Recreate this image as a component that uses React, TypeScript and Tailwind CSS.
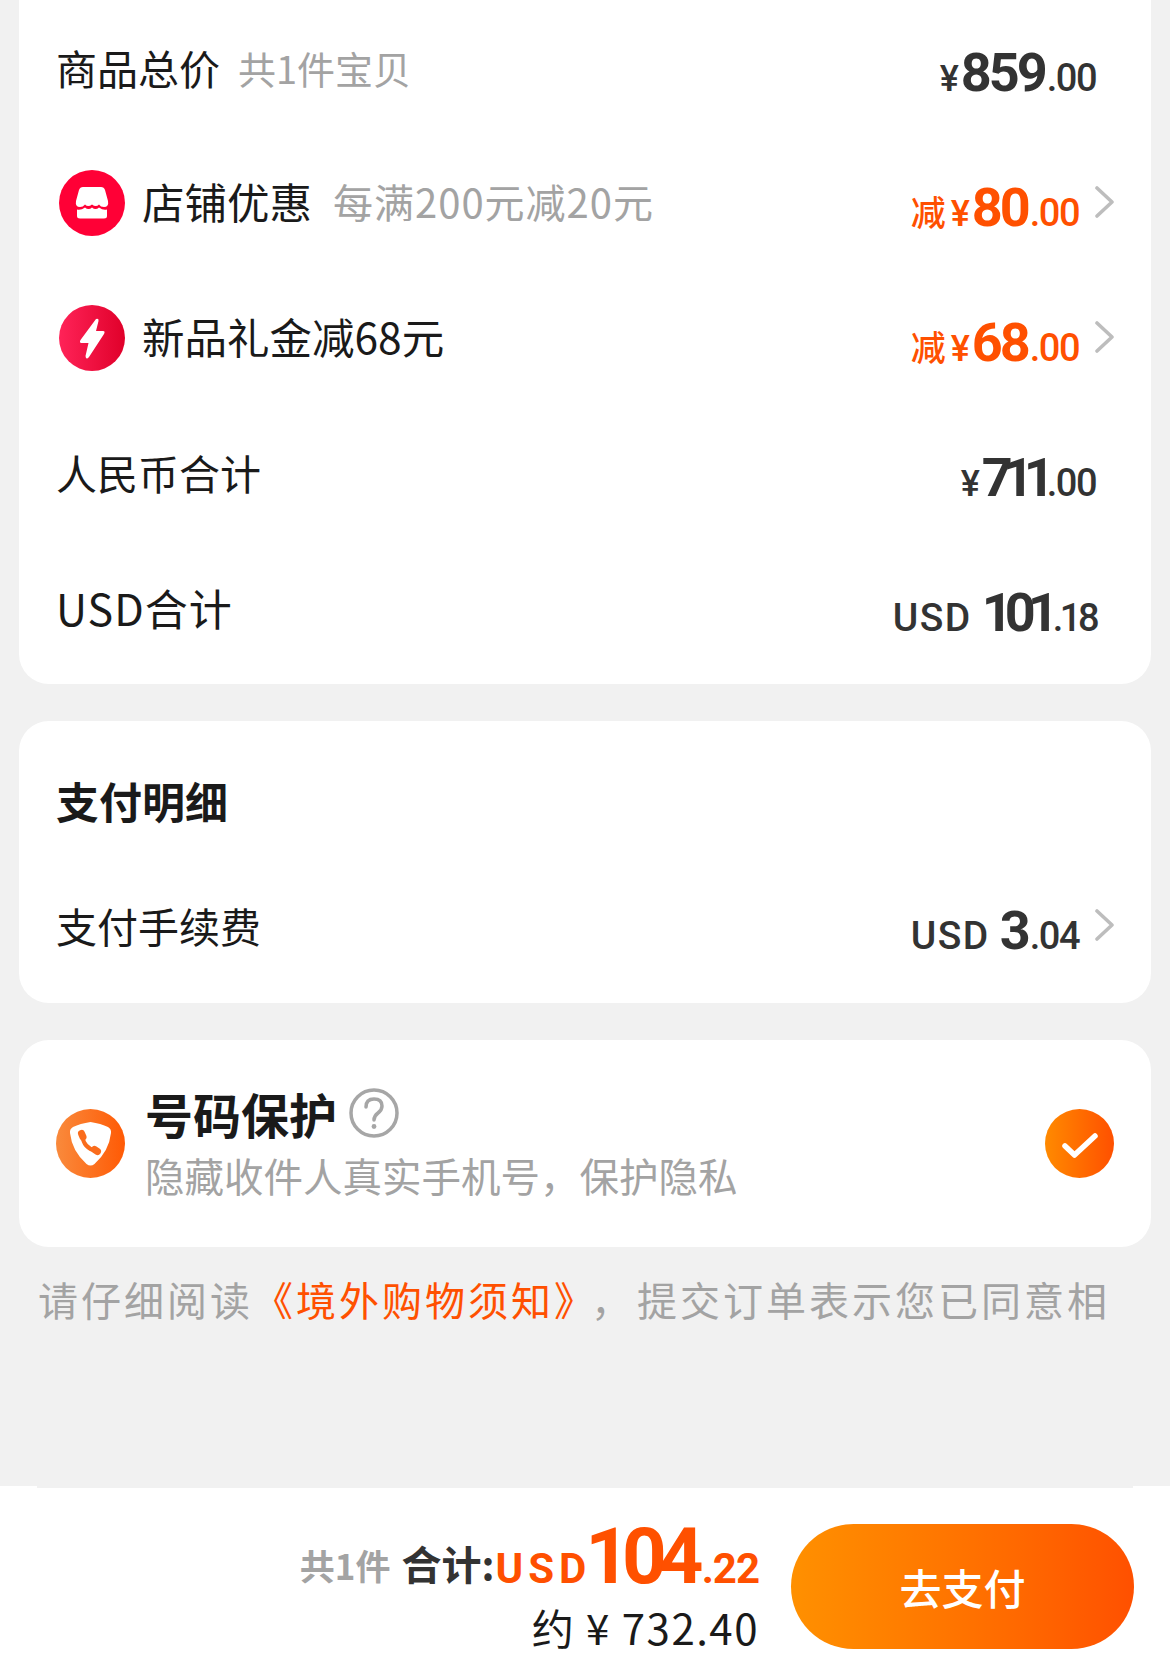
import React from 'react';

const CJK = '"Noto Sans CJK SC", "Noto Sans", sans-serif';
const NUM = { fontFamily: 'Roboto, "Noto Sans CJK SC", sans-serif' };

type PriceProps = {
  minus?: boolean;
  yen?: boolean;
  usd?: boolean;
  whole: string;
  cents: string;
  orange?: boolean;
  wholeClass?: string;
  centsClass?: string;
};

// 价格：前缀小、整数大、小数小
const Price: React.FC<PriceProps> = ({
  minus,
  yen,
  usd,
  whole,
  cents,
  orange,
  wholeClass = 'tracking-[-3px] mr-[2px]',
  centsClass = 'tracking-[-1.5px]',
}) => (
  <span
    className={`flex items-baseline font-medium pt-[10px] ${orange ? 'text-[#ff5000]' : 'text-[#333333]'}`}
    style={NUM}
  >
    {usd && <span className="text-[39px] leading-none tracking-[1.5px] mr-[10px]">USD</span>}
    {minus && <span className="text-[35px] leading-none mr-[5px]">减</span>}
    {yen && <span className="text-[36px] leading-none mr-[2px]">¥</span>}
    <span className={`text-[54px] leading-none font-bold ${wholeClass}`}>{whole}</span>
    <span className={`text-[38px] leading-none ${centsClass}`}>{cents}</span>
  </span>
);

const Chevron = () => (
  <svg width="20" height="34" viewBox="0 0 20 34" className="ml-[16px] -mr-[1px] mb-[2px] shrink-0">
    <path d="M2 3 L17 17 L2 31" fill="none" stroke="#bdbdbd" strokeWidth="3.6" strokeLinecap="round" strokeLinejoin="round" />
  </svg>
);

const ShopIcon = () => (
  <svg width="66" height="66" viewBox="0 0 66 66" className="shrink-0 ml-[3px]">
    <circle cx="33" cy="33" r="33" fill="#ff0036" />
    <path
      d="M24 17 H42 Q45 17 46 20 L49 31 Q50 37 45 37 Q41.500 37 40 34.500 Q37 37.500 33 34.500 Q29 37.500 26 34.500 Q24 37 21 37 Q16 37 17 31 L20 20 Q21 17 24 17 Z"
      fill="#fff"
    />
    <path
      d="M18 39.500 Q22 40.500 26 37.500 Q29.500 40.500 33 37.500 Q36.500 40.500 40 37.500 Q44 40.500 48 39.500 V46 Q48 48.500 45 48.500 H21 Q18 48.500 18 46 Z"
      fill="#fff"
    />
  </svg>
);

const BoltIcon = () => (
  <svg width="66" height="66" viewBox="0 0 66 66" className="shrink-0 ml-[3px]">
    <defs>
      <linearGradient id="bolt" x1="0" y1="0" x2="1" y2="0">
        <stop offset="0" stopColor="#ff2358" />
        <stop offset="1" stopColor="#e0002a" />
      </linearGradient>
    </defs>
    <circle cx="33" cy="33" r="33" fill="url(#bolt)" />
    <path
      d="M37 14 Q40 13 39.500 16 L37 26 H44 Q46.500 26 45 29 L30 52 Q27 55.500 26.500 51 L29.500 38 H22.500 Q20 38 21.500 35 Z"
      fill="#fff"
    />
  </svg>
);

const ShieldIcon = () => (
  <svg width="69" height="69" viewBox="0 0 69 69" className="shrink-0">
    <defs>
      <linearGradient id="shield" x1="0" y1="0" x2="1" y2="0">
        <stop offset="0" stopColor="#f98a3c" />
        <stop offset="1" stopColor="#ff5a05" />
      </linearGradient>
    </defs>
    <circle cx="34.500" cy="34.500" r="34.500" fill="url(#shield)" />
    <path
      d="M34.500 13 Q45 14.500 52 18 Q55.500 20 55 24 Q53 42 38.500 55 Q34.500 58 30.500 55 Q16 42 14 24 Q13.500 20 17 18 Q24 14.500 34.500 13 Z"
      fill="#fff"
    />
    <path d="M26.500 27 Q27.500 39 40 42" fill="none" stroke="#fa6c1c" strokeWidth="4" strokeLinecap="round" />
    <path d="M25.500 24.500 L27 28" fill="none" stroke="#fa6c1c" strokeWidth="7" strokeLinecap="round" />
    <path d="M38.500 40.500 L41.500 42.500" fill="none" stroke="#fa6c1c" strokeWidth="7" strokeLinecap="round" />
  </svg>
);

const CheckIcon = () => (
  <svg width="69" height="69" viewBox="0 0 69 69" className="shrink-0">
    <defs>
      <linearGradient id="check" x1="0" y1="0" x2="1" y2="0">
        <stop offset="0" stopColor="#ff8a00" />
        <stop offset="1" stopColor="#ff5000" />
      </linearGradient>
    </defs>
    <circle cx="34.500" cy="34.500" r="34.500" fill="url(#check)" />
    <path d="M20 37 L29.500 46 L50 27" fill="none" stroke="#fff" strokeWidth="5.500" strokeLinecap="round" strokeLinejoin="round" />
  </svg>
);

const HelpIcon = () => (
  <svg width="50" height="50" viewBox="0 0 50 50" className="shrink-0">
    <circle cx="25" cy="25" r="23" fill="none" stroke="#a6a6a6" strokeWidth="3.500" />
    <path d="M17 19 Q17 11 25 11 Q33 11 33 18 Q33 22 29 25 Q25 28 25 32" fill="none" stroke="#a6a6a6" strokeWidth="3.500" strokeLinecap="round" />
    <circle cx="25" cy="38.500" r="2.400" fill="#a6a6a6" />
  </svg>
);

export default function App() {
  return (
    <div className="w-[1170px] h-[1659px] flex flex-col bg-[#f1f1f1] overflow-hidden" style={{ fontFamily: CJK }}>
      {/* 金额明细 */}
      <div className="mx-[19px] h-[684px] bg-white rounded-b-[30px] px-[37px] flex flex-col">
        <div className="h-[135px] flex items-center justify-between pr-[18px]">
          <div className="flex items-center text-[41px] text-[#1a1a1a]">
            商品总价
            <span className="ml-[18px] text-[#a3a3a3] text-[38px]">共1件宝贝</span>
          </div>
          <Price yen whole="859" cents=".00" />
        </div>
        <div className="h-[135px] flex items-center justify-between">
          <div className="flex items-center text-[42.5px] text-[#1a1a1a]">
            <ShopIcon />
            <span className="ml-[17px] pb-[3px]">店铺优惠</span>
            <span className="ml-[21px] pb-[3px] text-[#a3a3a3] text-[40px] tracking-[1px] whitespace-nowrap">每满200元减20元</span>
          </div>
          <div className="flex items-center">
            <Price minus yen whole="80" cents=".00" orange />
            <Chevron />
          </div>
        </div>
        <div className="h-[135px] flex items-center justify-between">
          <div className="flex items-center text-[42.5px] text-[#1a1a1a]">
            <BoltIcon />
            <span className="ml-[17px] pb-[3px]">新品礼金减68元</span>
          </div>
          <div className="flex items-center">
            <Price minus yen whole="68" cents=".00" orange />
            <Chevron />
          </div>
        </div>
        <div className="h-[135px] flex items-center justify-between pr-[18px]">
          <span className="text-[41px] text-[#1a1a1a]">人民币合计</span>
          <Price yen whole="711" cents=".00" wholeClass="tracking-[-10px] mr-[2px]" />
        </div>
        <div className="h-[135px] flex items-center justify-between pr-[18px]">
          <span className="text-[43px] tracking-[1px] text-[#1a1a1a]">USD合计</span>
          <Price usd whole="101" cents=".18" wholeClass="tracking-[-8px] mr-[2px]" centsClass="tracking-[-3.5px]" />
        </div>
      </div>

      {/* 支付明细 */}
      <div className="mx-[19px] mt-[37px] h-[282px] bg-white rounded-[30px] px-[37px] flex flex-col">
        <div className="h-[158px] flex items-center text-[43px] font-bold text-[#1a1a1a]">支付明细</div>
        <div className="h-[94px] flex items-center justify-between">
          <span className="text-[41px] text-[#1a1a1a]">支付手续费</span>
          <div className="flex items-center">
            <Price usd whole="3" cents=".04" />
            <Chevron />
          </div>
        </div>
      </div>

      {/* 号码保护 */}
      <div className="mx-[19px] mt-[37px] h-[207px] bg-white rounded-[30px] px-[37px] flex items-center justify-between">
        <div className="flex items-center">
          <ShieldIcon />
          <div className="ml-[20px] flex flex-col">
            <div className="flex items-center text-[48px] leading-[62px] font-bold text-[#1a1a1a]">
              号码保护
              <span className="ml-[12px]"><HelpIcon /></span>
            </div>
            <span className="text-[39.5px] leading-[62px] text-[#a3a3a3] whitespace-nowrap">隐藏收件人真实手机号，保护隐私</span>
          </div>
        </div>
        <CheckIcon />
      </div>

      {/* 协议 */}
      <div className="mt-[24px] pl-[38px] text-[40px] leading-[56px] text-[#a3a3a3] tracking-[3px] whitespace-pre overflow-hidden">
        请仔细阅读<span className="text-[#ff5000]">《境外购物须知》</span><span className="ml-[14px] mr-[3px]">，</span>提交订单表示您已同意相
      </div>

      {/* 底部结算栏 */}
      <div className="mt-auto h-[173px] bg-white flex flex-col">
        <div className="mx-[37px] h-[2px] bg-[#f1f1f1]" />
        <div className="flex items-start justify-end pr-[36px] pt-[36px]">
          <div className="flex flex-col items-end mr-[32px] -mt-[6px]">
            <div className="flex items-baseline h-[84px] font-bold leading-none">
              <span className="text-[35px] text-[#a3a3a3] -translate-y-[3px]">共1件</span>
              <span className="text-[40px] text-[#333333] ml-[11px] -translate-y-[3px]">合计:</span>
              <span className="text-[#ff5000] text-[42px] tracking-[5px] ml-[1px] -mr-[6px]" style={NUM}>USD</span>
              <span className="text-[#ff5000] text-[78px] tracking-[-8px] mr-[6px]" style={NUM}>104</span>
              <span className="text-[#ff5000] text-[42px] tracking-[-1px]" style={NUM}>.22</span>
            </div>
            <div className="text-[42px] leading-[50px] text-[#1a1a1a] tracking-[1.5px] whitespace-pre">约 ¥ 732.40</div>
          </div>
          <button className="w-[343px] h-[125px] rounded-full bg-gradient-to-r from-[#ff9000] to-[#ff5000] text-white text-[42px] font-medium">
            去支付
          </button>
        </div>
      </div>
    </div>
  );
}
